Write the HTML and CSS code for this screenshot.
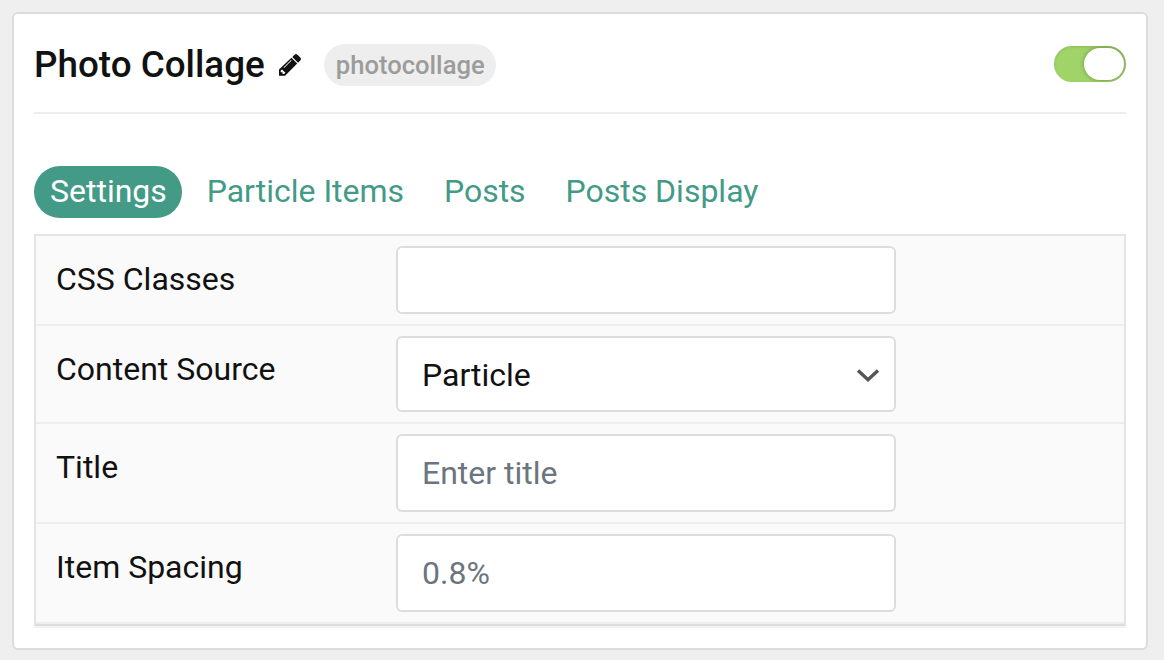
FILE: index.html
```html
<!DOCTYPE html>
<html lang="en">
<head>
<meta charset="utf-8">
<title>Photo Collage</title>
<link rel="stylesheet" href="styles.css">
</head>
<body>
<main class="card">
  <header class="card-header">
    <h1 class="title">Photo Collage</h1>
    <svg class="pencil" viewBox="0 0 22 22" aria-hidden="true"><path fill="currentColor" fill-rule="evenodd" d="M12.4 3.8 18.2 9.6 6.1 21.7H0v-6.1ZM1.7 16.6v1.7h1.8v1.8h1.6l1.3-1.3-3.4-3.4ZM12 6 4.5 13.5l.6.6L12.6 6.6Z"/><path fill="currentColor" d="M13.3 2.9 15.6.7q1.4-1.3 2.8 0l2.9 2.9q1.4 1.4 0 2.8l-2.2 2.3Z"/></svg>
    <span class="badge">photocollage</span>
    <span class="toggle"><span class="knob"></span></span>
  </header>
  <nav class="tabs">
    <a class="tab active">Settings</a>
    <a class="tab">Particle Items</a>
    <a class="tab">Posts</a>
    <a class="tab">Posts Display</a>
  </nav>
  <section class="panel">
    <div class="row row-classes"><label class="label">CSS Classes</label><input class="field" type="text"></div>
    <div class="row row-source"><label class="label">Content Source</label>
      <div class="field select"><span>Particle</span><svg class="chevron" viewBox="0 0 24 16" aria-hidden="true"><path d="M2 3.5 12 12.8 22 3.5" fill="none" stroke="currentColor" stroke-width="3.4"/></svg></div>
    </div>
    <div class="row row-title"><label class="label">Title</label><input class="field" type="text" placeholder="Enter title"></div>
    <div class="row row-spacing"><label class="label">Item Spacing</label><input class="field" type="text" placeholder="0.8%"></div>
  </section>
</main>
</body>
</html>
```
FILE: styles.css
```css
* { box-sizing: border-box; }
body {
  margin: 0;
  height: 660px;
  padding: 12px 16px 10px 12px;
  background: #efefef;
  color: #111;
  font-family: Roboto, sans-serif;
  font-size: 32px;
  overflow: hidden;
}
.card {
  height: 638px;
  padding: 0 20px;
  background: #fff;
  border: 2px solid #ddd;
  border-radius: 6px;
}
.card-header {
  display: flex;
  align-items: center;
  height: 100px;
  padding-top: 4px;
  border-bottom: 2px solid #eee;
}
.title { margin: 0; font-size: 36.8px; line-height: 42px; font-weight: 500; }
.pencil { width: 22px; height: 22px; margin-left: 14.5px; }
.badge {
  height: 42px;
  margin-left: 23.1px;
  padding: 0 11.5px;
  border-radius: 21px;
  background: #eee;
  color: #9c9c9c;
  font-size: 25.6px;
  line-height: 42px;
  font-weight: 500;
}
.toggle {
  display: flex;
  justify-content: flex-end;
  width: 72px;
  height: 36px;
  margin: 0 0 2px auto;
  padding: 2px;
  border-radius: 18px;
  background: #a0d468;
  box-shadow: inset 0 1px 3px rgba(0, 0, 0, 0.12);
  overflow: hidden;
}
.knob { width: 40px; height: 32px; border-radius: 16px; background: #fff; box-shadow: 0 0 5px rgba(0, 0, 0, 0.32); }
.tabs { display: flex; gap: 8.8px; margin-top: 52px; }
.tab {
  height: 52px;
  padding: 0 15px 0 16px;
  border-radius: 26px;
  color: #439a86;
  line-height: 50px;
}
.active { background: #439a86; color: #fff; }
.panel {
  height: 392px;
  margin-top: 16px;
  border: 2px solid #e5e5e5;
  border-bottom-color: #ddd;
  background: #fafafa;
  box-shadow: 0 2px #f3f3f3;
}
.row {
  display: flex;
  align-items: flex-start;
  padding: 10px 20px;
  border-bottom: 2px solid #eee;
}
.row-classes { height: 90px; }
.row-source { height: 98px; }
.row-title { height: 100px; }
.row-spacing { height: 100px; }
.label { width: 340px; line-height: 66px; }
.field {
  width: 500px;
  height: 100%;
  padding: 0 24px;
  border: 2px solid #ddd;
  border-radius: 6px;
  background: #fff;
  color: #111;
  font: inherit;
}
.field::placeholder { color: #6c757d; opacity: 1; }
.select { display: flex; align-items: center; justify-content: space-between; padding: 2px 14px 0 24px; }
.chevron { width: 24px; height: 16px; color: #555; }
```
